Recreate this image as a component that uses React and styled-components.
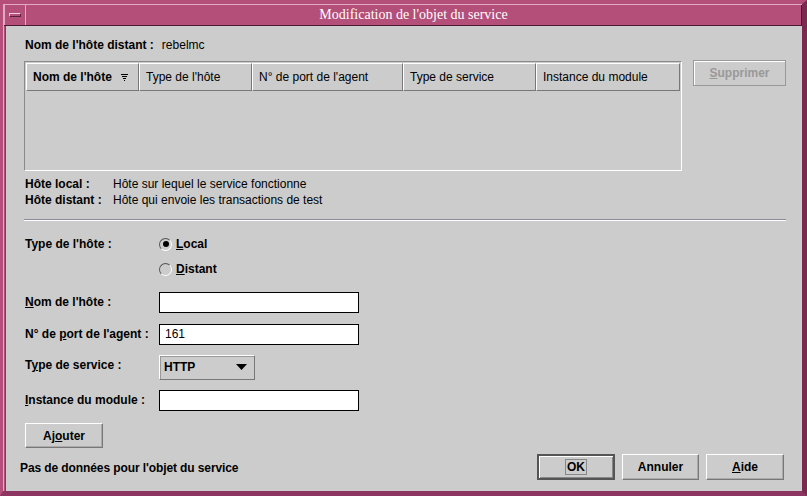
import React from "react";
import styled, { createGlobalStyle, css } from "styled-components";

const GlobalStyle = createGlobalStyle`
  html, body { margin: 0; padding: 0; background: #cccccc; }
  body { font-family: "Liberation Sans", Arial, sans-serif; font-size: 12px; color: #000; }
`;

const Frame = styled.div`
  width: 807px;
  height: 496px;
  box-sizing: border-box;
  background: #b34f78;
  border-top: 4px solid #b34f78;
  border-left: 3px solid #b34f78;
  border-right: 5px solid #7a2a50;
  border-bottom: 5px solid #8c3560;
  display: flex;
  flex-direction: column;
  box-shadow: inset 1px 1px 0 #e4a9c2;
`;

const TitleBar = styled.div`
  display: flex;
  height: 20px;
  margin: 1px 0 0 1px;
  border-bottom: 1px solid #4d1a33;
`;

const MenuButton = styled.div`
  width: 20px;
  display: flex;
  align-items: center;
  justify-content: center;
  border-right: 1px solid #e4a9c2;
  border-left: 1px solid #e4a9c2;

  &::before {
    content: "";
    width: 10px;
    height: 2px;
    border: 1px solid #f0d0de;
    border-bottom-color: #5a2040;
    border-right-color: #5a2040;
  }
`;

const Title = styled.div`
  flex: 1;
  display: flex;
  align-items: center;
  justify-content: center;
  font-family: "Liberation Serif", "Times New Roman", serif;
  font-size: 14px;
  color: #ffffff;
  border-right: 1px solid #4d1a33;
`;

const Body = styled.div`
  flex: 1;
  background: #cccccc;
  margin-left: 2px;
  border-left: 1px solid #8c3560;
  padding: 11px 16px 0 18px;
  display: flex;
  flex-direction: column;
`;

const InfoRow = styled.div`
  display: flex;
  gap: 8px;
  padding-left: 1px;
  height: 16px;
  align-items: center;
  margin-top: ${(p) => p.$top || 0}px;
`;

const Bold = styled.span`
  font-weight: bold;
  ${(p) => p.$width && css`width: ${p.$width}px; flex: none;`}
`;

const TableArea = styled.div`
  display: flex;
  align-items: flex-start;
  gap: 11px;
  margin-top: 8px;
`;

const Table = styled.div`
  width: 658px;
  height: 110px;
  box-sizing: border-box;
  border: 1px solid;
  border-color: #8a8a8a #ffffff #ffffff #8a8a8a;
  padding: 1px;
  display: flex;
  align-items: flex-start;
`;

const HeaderCell = styled.div`
  width: ${(p) => p.$w}px;
  height: 28px;
  box-sizing: border-box;
  border: 1px solid;
  border-color: #ffffff #777777 #777777 #ffffff;
  display: flex;
  align-items: center;
  padding-left: 6px;
  gap: 9px;
  font-weight: ${(p) => (p.$bold ? "bold" : "normal")};
`;

const SortIcon = () => (
  <svg width="7" height="7" viewBox="0 0 7 7">
    <path d="M0 0.5h7M1 2.5h5M2 4.5h3M3 6.5h1" stroke="#000" strokeWidth="1" />
  </svg>
);

const Button = styled.button`
  box-sizing: border-box;
  flex: none;
  width: ${(p) => p.$w || 77}px;
  height: ${(p) => p.$h || 26}px;
  background: #cccccc;
  font-family: "Liberation Sans", Arial, sans-serif;
  font-size: 12px;
  font-weight: bold;
  color: #000;
  padding: 0;
  border: 1px solid;
  border-color: #ffffff #777777 #777777 #ffffff;
  box-shadow: inset -1px -1px 0 #aaaaaa;
  ${(p) =>
    p.$disabled &&
    css`
      color: #999999;
      border-color: #999999;
      box-shadow: inset 1px 1px 0 #ffffff;
      margin-top: -1px;
    `}
  ${(p) =>
    p.$default &&
    css`
      border: 2px solid #555555;
      box-shadow: inset 1px 1px 0 #ffffff, inset -1px -1px 0 #888888;
    `}
  & u { text-decoration: underline; }
`;

const FocusText = styled.span`
  outline: 1px solid #888888;
  padding: 0 1px;
`;

const Separator = styled.div`
  height: 0;
  border-top: 1px solid #8a8a9a;
  border-bottom: 1px solid #ffffff;
  margin-top: 11px;
`;

const Form = styled.div`
  display: grid;
  grid-template-columns: 134px 200px;
  margin-top: 11px;
  padding-left: 1px;
  align-items: center;
`;

const Label = styled.label`
  font-weight: bold;
  height: ${(p) => p.$h}px;
  display: flex;
  align-items: center;
  & u { text-decoration: underline; }
`;

const RadioRow = styled.div`
  height: ${(p) => p.$h}px;
  display: flex;
  align-items: center;
  gap: 4px;
  font-weight: bold;
  & u { text-decoration: underline; }
`;

const RadioCircle = styled.span`
  width: 13px;
  height: 13px;
  border-radius: 50%;
  box-sizing: border-box;
  border: 1px solid;
  border-color: #555555 #ffffff #ffffff #555555;
  background: #cccccc;
  display: flex;
  align-items: center;
  justify-content: center;
  &::after {
    content: "";
    width: 6px;
    height: 6px;
    border-radius: 50%;
    background: ${(p) => (p.$checked ? "#000" : "transparent")};
  }
`;

const Cell = styled.div`
  height: ${(p) => p.$h}px;
  display: flex;
  align-items: center;
`;

const TextInput = styled.div`
  width: 200px;
  height: 21px;
  box-sizing: border-box;
  border: 1px solid #000;
  background: #ffffff;
  padding-left: 5px;
  display: flex;
  align-items: center;
`;

const Combo = styled.div`
  width: 96px;
  height: 25px;
  box-sizing: border-box;
  border: 1px solid;
  border-color: #ffffff #777777 #777777 #ffffff;
  box-shadow: inset 1px 1px 0 #999999;
  display: flex;
  align-items: center;
  justify-content: space-between;
  padding: 0 7px 0 4px;
  margin-top: 4px;
  font-weight: bold;
`;

const Arrow = () => (
  <svg width="11" height="6" viewBox="0 0 11 6">
    <path d="M0 0h11L5.5 6z" fill="#000" />
  </svg>
);

const AddRow = styled.div`
  margin-top: 7px;
  padding-left: 1px;
`;

const Footer = styled.div`
  display: flex;
  align-items: center;
  margin: 6px 2px 0 -4px;
  gap: 7px;
`;

const Status = styled.div`
  flex: 1;
  font-weight: bold;
  letter-spacing: -0.1px;
  padding-top: 1px;
`;

const columns = [
  { w: 113, label: "Nom de l'hôte", bold: true },
  { w: 113, label: "Type de l'hôte" },
  { w: 151, label: "N° de port de l'agent" },
  { w: 133, label: "Type de service" },
  { w: 144, label: "Instance du module" },
];

export default function App() {
  return (
    <>
      <GlobalStyle />
      <Frame>
        <TitleBar>
          <MenuButton />
          <Title>Modification de l'objet du service</Title>
        </TitleBar>
        <Body>
          <InfoRow>
            <Bold>Nom de l'hôte distant :</Bold>
            <span>rebelmc</span>
          </InfoRow>
          <TableArea>
            <Table>
              {columns.map((c) => (
                <HeaderCell key={c.label} $w={c.w} $bold={c.bold}>
                  {c.label}
                  {c.bold && <SortIcon />}
                </HeaderCell>
              ))}
            </Table>
            <Button $w={93} $h={26} $disabled>
              <u>S</u>upprimer
            </Button>
          </TableArea>
          <InfoRow $top={5}>
            <Bold $width={80}>Hôte local :</Bold>
            <span>Hôte sur lequel le service fonctionne</span>
          </InfoRow>
          <InfoRow>
            <Bold $width={80}>Hôte distant :</Bold>
            <span>Hôte qui envoie les transactions de test</span>
          </InfoRow>
          <Separator />
          <Form>
            <Label $h={24}>Type de l'hôte :</Label>
            <RadioRow $h={24}>
              <RadioCircle $checked />
              <span><u>L</u>ocal</span>
            </RadioRow>
            <span />
            <RadioRow $h={26}>
              <RadioCircle />
              <span><u>D</u>istant</span>
            </RadioRow>
            <Label $h={40}><span><u>N</u>om de l'hôte :</span></Label>
            <Cell $h={40}><TextInput /></Cell>
            <Label $h={24}><span>N° de <u>p</u>ort de l'agent :</span></Label>
            <Cell $h={24}><TextInput>161</TextInput></Cell>
            <Label $h={38}><span>T<u>y</u>pe de service :</span></Label>
            <Cell $h={38}><Combo>HTTP<Arrow /></Combo></Cell>
            <Label $h={32}><span><u>I</u>nstance du module :</span></Label>
            <Cell $h={32}><TextInput /></Cell>
          </Form>
          <AddRow>
            <Button $w={78} $h={25}>
              Aj<u>o</u>uter
            </Button>
          </AddRow>
          <Footer>
            <Status>Pas de données pour l'objet du service</Status>
            <Button $w={78} $h={26} $default>
              <FocusText>OK</FocusText>
            </Button>
            <Button $w={77} $h={26}>Annuler</Button>
            <Button $w={78} $h={26}>
              <u>A</u>ide
            </Button>
          </Footer>
        </Body>
      </Frame>
    </>
  );
}
